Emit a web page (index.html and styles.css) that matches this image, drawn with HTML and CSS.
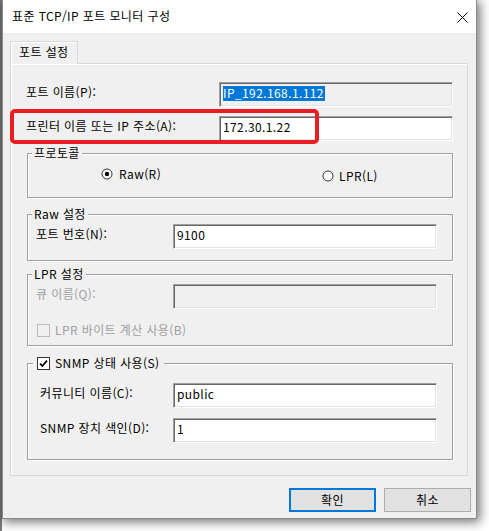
FILE: index.html
```html
<!DOCTYPE html>
<html lang="ko">
<head>
<meta charset="utf-8">
<title>표준 TCP/IP 포트 모니터 구성</title>
<link rel="stylesheet" href="styles.css">
</head>
<body>
<div class="window">
  <div class="titlebar">
    <span class="title">표준 TCP/IP 포트 모니터 구성</span>
    <svg class="close" width="11" height="11" viewBox="0 0 11 11"><path d="M0.5 0.5 L10.5 10.5 M10.5 0.5 L0.5 10.5" stroke="#000" stroke-width="1" fill="none"/></svg>
  </div>
  <div class="content">
    <div class="tabs"><div class="tab">포트 설정</div></div>
    <div class="panel">
      <div class="toprow first">
        <span class="label">포트 이름(P):</span>
        <div class="edit readonly"><span class="sel">IP_192.168.1.112</span></div>
      </div>
      <div class="toprow second">
        <span class="label">프린터 이름 또는 IP 주소(A):</span>
        <div class="edit">172.30.1.22</div>
      </div>
      <div class="highlight"></div>

      <fieldset class="group protocol">
        <legend>프로토콜</legend>
        <div class="radios">
          <div class="radio raw">
            <svg width="12" height="12" viewBox="0 0 12 12"><circle cx="6" cy="6" r="5" fill="#fff" stroke="#333"/><circle cx="6" cy="6" r="2.2" fill="#000"/></svg>
            <span>Raw(R)</span>
          </div>
          <div class="radio lpr">
            <svg width="12" height="12" viewBox="0 0 12 12"><circle cx="6" cy="6" r="5" fill="#fff" stroke="#333"/></svg>
            <span>LPR(L)</span>
          </div>
        </div>
      </fieldset>

      <fieldset class="group raw-set">
        <legend>Raw 설정</legend>
        <div class="group-body">
          <div class="row">
            <span class="label">포트 번호(N):</span>
            <div class="edit">9100</div>
          </div>
        </div>
      </fieldset>

      <fieldset class="group lpr-set">
        <legend>LPR 설정</legend>
        <div class="group-body lpr-body">
          <div class="row">
            <span class="label disabled">큐 이름(Q):</span>
            <div class="edit readonly"></div>
          </div>
          <div class="check disabled">
            <svg width="13" height="13" viewBox="0 0 13 13"><rect x="0.5" y="0.5" width="12" height="12" fill="#f0f0f0" stroke="#bcbcbc"/></svg>
            <span>LPR 바이트 계산 사용(B)</span>
          </div>
        </div>
      </fieldset>

      <fieldset class="group snmp-set">
        <legend class="check-legend">
          <svg width="13" height="13" viewBox="0 0 13 13"><rect x="0.5" y="0.5" width="12" height="12" fill="#fff" stroke="#333"/><path d="M3 6.5 L5.3 9 L10 3.6" stroke="#000" stroke-width="1.7" fill="none"/></svg>
          <span>SNMP 상태 사용(S)</span>
        </legend>
        <div class="group-body snmp-body">
          <div class="row">
            <span class="label">커뮤니티 이름(C):</span>
            <div class="edit">public</div>
          </div>
          <div class="row second">
            <span class="label">SNMP 장치 색인(D):</span>
            <div class="edit">1</div>
          </div>
        </div>
      </fieldset>
    </div>
    <div class="buttons">
      <button class="btn default">확인</button>
      <button class="btn">취소</button>
    </div>
  </div>
</div>
</body>
</html>
```

FILE: styles.css
```css
* { box-sizing: border-box; }
html, body { margin: 0; padding: 0; }
body {
  width: 489px;
  height: 531px;
  overflow: hidden;
  background: linear-gradient(to right, #7b7b7b 0, #7b7b7b 2px, #ffffff 2px);
  font-family: "Noto Sans CJK KR", "Noto Sans", sans-serif;
  font-size: 12px;
  line-height: 16px;
  letter-spacing: 0.4px;
  color: #000;
}
.window {
  margin-left: 2px;
  width: 475px;
  height: 519px;
  border-left: 1px solid #8a8a8a;
  border-right: 1px solid #8a8a8a;
  border-bottom: 1px solid #8a8a8a;
  background: #f0f0f0;
  box-shadow: 2px 2px 10px 1px rgba(0, 0, 0, 0.55);
  display: flex;
  flex-direction: column;
}
.titlebar {
  height: 33px;
  flex: none;
  background: #fff;
  display: flex;
  align-items: center;
  justify-content: space-between;
  padding: 0 8px 2px 9px;
}
.title { font-size: 12px; }
.close { display: block; margin-top: 3px; }
.content {
  flex: 1;
  padding: 8px 8px 0 7px;
}
.tabs { display: flex; }
.tab {
  position: relative;
  z-index: 1;
  width: 68px;
  height: 23px;
  margin-bottom: -1px;
  padding: 2px 0 0 8px;
  background: #f0f0f0;
  border: 1px solid #d9d9d9;
  border-bottom: none;
  box-shadow: inset 1px 1px 0 #fff;
}
.panel {
  position: relative;
  width: 458px;
  height: 413px;
  border: 1px solid #d9d9d9;
  box-shadow: inset 1px 1px 0 #fff;
  padding: 0 14px 0 16px;
}
.toprow {
  display: grid;
  grid-template-columns: 193px 234px;
  align-items: center;
  margin-left: -1px;
}
.toprow.first { margin-top: 18px; }
.toprow.second { margin-top: 9px; }
.label { white-space: nowrap; margin-bottom: 6px; }
.label.disabled { color: #a0a0a0; }
.edit {
  height: 25px;
  background: #fff;
  border-top: 1px solid #a0a0a0;
  border-left: 1px solid #a0a0a0;
  border-right: 1px solid #fff;
  border-bottom: 1px solid #fff;
  box-shadow: inset 1px 1px 0 #696969, inset -1px -1px 0 #e3e3e3;
  padding: 1px 0 0 3px;
  line-height: 17px;
  white-space: nowrap;
}
.edit.readonly { background: #f0f0f0; }
.edit .sel {
  display: inline-block;
  margin-top: 2px;
  background: #0078d7;
  color: #fff;
  line-height: 14px;
  height: 15px;
  padding-right: 1px;
}
.highlight {
  position: absolute;
  left: -1px;
  top: 45px;
  width: 309px;
  height: 35px;
  border: 4px solid #ec1c24;
  border-radius: 5px;
}
.group {
  margin: 0;
  padding: 0;
  min-inline-size: 0;
  width: 426px;
  border: 1px solid #a0a0a0;
  box-shadow: 1px 1px 0 #fff, inset 1px 1px 0 #fff;
}
.group legend {
  margin-left: 4px;
  padding: 0 2px;
  line-height: 16px;
  background: #f0f0f0;
}
.protocol { margin-top: 4px; }
.radios {
  height: 36px;
  display: flex;
  align-items: flex-start;
  padding: 6px 0 0 73px;
}
.radio {
  display: flex;
  align-items: center;
  gap: 6px;
  height: 14px;
}
.radio svg { display: block; }
.radio.raw { width: 221px; }
.radio.lpr { margin-top: 2px; gap: 5px; }
.raw-set { margin-top: 8px; }
.lpr-set { margin-top: 5px; }
.snmp-set { margin-top: 9px; }
.group-body { padding: 2px 15px 11px 8px; }
.row {
  display: grid;
  grid-template-columns: 137px 264px;
  align-items: center;
}
.lpr-body { padding-bottom: 7px; }
.check {
  display: flex;
  align-items: center;
  gap: 5px;
  height: 16px;
  margin-top: 13px;
  margin-left: 1px;
}
.check svg { display: block; }
.check.disabled { color: #a0a0a0; }
.group legend.check-legend {
  margin-left: 5px;
  padding: 0 4px;
  display: flex;
  align-items: center;
  gap: 5px;
}
.check-legend svg { display: block; }
.snmp-body { padding: 12px 15px 16px 8px; }
.snmp-body .label { padding-left: 4px; }
.snmp-body .row.second { margin-top: 10px; }
.buttons {
  display: flex;
  justify-content: flex-end;
  gap: 8px;
  margin: 12px -3px 0 0;
}
.btn {
  width: 87px;
  height: 24px;
  padding: 0 0 2px;
  font-family: inherit;
  font-size: 12px;
  letter-spacing: 0.4px;
  color: #000;
  background: #e1e1e1;
  border: 1px solid #adadad;
}
.btn.default { border: 2px solid #0078d7; }
```
